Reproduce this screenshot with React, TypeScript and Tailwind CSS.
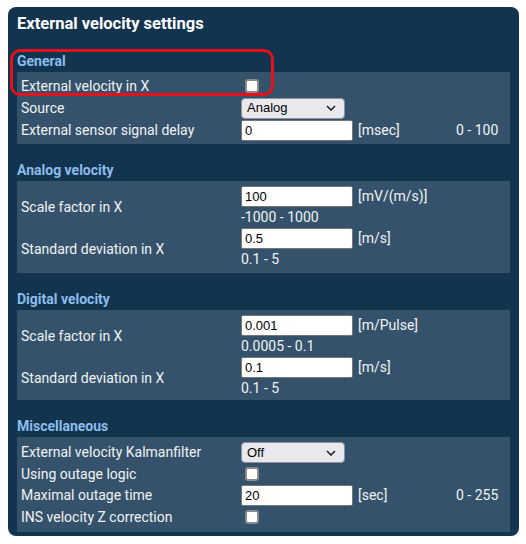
import React from "react";

const font = { fontFamily: "Roboto, 'Noto Sans', sans-serif" };

function Checkbox() {
  return <span className="ml-[4px] inline-block w-[14px] h-[14px] rounded-[3px] border-2 border-[#8a8a8a] bg-white" />;
}

function TextInput({ value }: { value: string }) {
  return (
    <input
      readOnly
      value={value}
      className="w-[112px] h-[21px] px-[3px] bg-white text-black border border-[#767676] rounded-[2px] text-[13px] outline-none"
      style={{ fontFamily: "'Liberation Sans', Arial, sans-serif" }}
    />
  );
}

function Select({ value }: { value: string }) {
  return (
    <div
      className="w-[104px] h-[21px] flex items-center justify-between pl-[5px] pr-[8px] bg-[#e9e9ed] border border-[#8f8f9d] rounded-[4px] text-[13px] text-black"
      style={{ fontFamily: "'Liberation Sans', Arial, sans-serif" }}
    >
      <span>{value}</span>
      <svg width="10" height="6" viewBox="0 0 10 6" fill="none">
        <path d="M1 1l4 4 4-4" stroke="#222" strokeWidth="1.6" />
      </svg>
    </div>
  );
}

function Row({ label, control, unit, range, h = "h-[22px]" }: { label: string; control: React.ReactNode; unit?: string; range?: string; h?: string }) {
  return (
    <div className={`grid grid-cols-[220px_117px_98px_1fr] items-center ${h}`}>
      <span>{label}</span>
      <div className="flex items-center">{control}</div>
      <span>{unit}</span>
      <span>{range}</span>
    </div>
  );
}

function Block({ label, value, unit, range }: { label: string; value: string; unit: string; range: string }) {
  return (
    <div className="grid grid-cols-[220px_117px_1fr] grid-rows-[21px_21px] items-center">
      <span className="row-span-2">{label}</span>
      <TextInput value={value} />
      <span>{unit}</span>
      <span className="col-span-2">{range}</span>
    </div>
  );
}

function Section({ title, first, children, box }: { title: string; first?: boolean; children: React.ReactNode; box: string }) {
  return (
    <div className={first ? "mt-[19px]" : "mt-[17px]"}>
      <div className="h-[19px] leading-[19px] text-[14px] font-bold text-[#8dbdeb] mb-[1px]">{title}</div>
      <div className={`bg-[#34526b] px-[4px] ${box}`}>{children}</div>
    </div>
  );
}

export default function App() {
  return (
    <div className="w-[526px] h-[544px] bg-white pt-[7px] pl-[8px]" style={font}>
      <div className="relative w-[511px] h-[529px] bg-[#12344f] rounded-[8px] px-[9px] pt-[8px] text-[14px] text-[#f2f2f2]">
        <div className="h-[18px] leading-[18px] text-[16.5px] font-bold text-white">External velocity settings</div>

        <Section title="General" first box="py-[3px]">
          <Row label="External velocity in X" control={<Checkbox />} />
          <Row label="Source" control={<Select value="Analog" />} />
          <Row label="External sensor signal delay" control={<TextInput value="0" />} unit="[msec]" range="0 - 100" />
        </Section>

        <Section title="Analog velocity" box="pt-[5px] pb-[3px]">
          <Block label="Scale factor in X" value="100" unit="[mV/(m/s)]" range="-1000 - 1000" />
          <Block label="Standard deviation in X" value="0.5" unit="[m/s]" range="0.1 - 5" />
        </Section>

        <Section title="Digital velocity" box="pt-[5px] pb-[1px]">
          <Block label="Scale factor in X" value="0.001" unit="[m/Pulse]" range="0.0005 - 0.1" />
          <Block label="Standard deviation in X" value="0.1" unit="[m/s]" range="0.1 - 5" />
        </Section>

        <Section title="Miscellaneous" box="pt-[5px] pb-[4px]">
          <Row h="h-[21.5px]" label="External velocity Kalmanfilter" control={<Select value="Off" />} />
          <Row h="h-[21.5px]" label="Using outage logic" control={<Checkbox />} />
          <Row h="h-[21.5px]" label="Maximal outage time" control={<TextInput value="20" />} unit="[sec]" range="0 - 255" />
          <Row h="h-[21.5px]" label="INS velocity Z correction" control={<Checkbox />} />
        </Section>

        <div className="absolute left-[2px] top-[42px] w-[264px] h-[47px] border-[3px] border-[#e8101a] rounded-[10px]" />
      </div>
    </div>
  );
}
